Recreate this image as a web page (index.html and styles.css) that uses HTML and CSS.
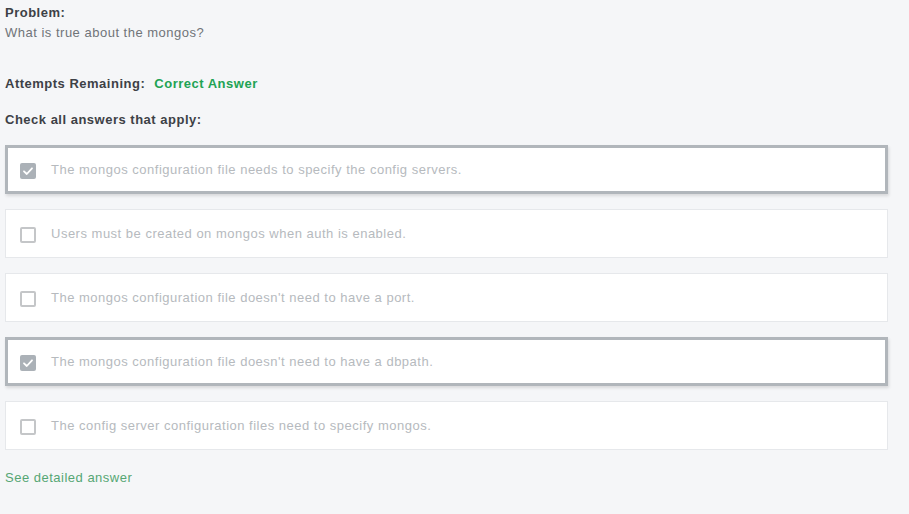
FILE: index.html
```html
<!DOCTYPE html>
<html>
<head>
<meta charset="utf-8">
<link rel="stylesheet" href="styles.css">
</head>
<body>
<div class="page">
  <div class="label">Problem:</div>
  <div class="question">What is true about the mongos?</div>
  <div class="attempts"><span class="label">Attempts Remaining:</span> <span class="correct">Correct Answer</span></div>
  <div class="label check-all">Check all answers that apply:</div>
  <div class="options">
    <div class="option checked">
      <span class="box"><svg viewBox="0 0 16 16" width="16" height="16"><path d="M4 8.3 L6.8 11 L12 5.3" fill="none" stroke="#fff" stroke-width="1.8" stroke-linecap="round" stroke-linejoin="round"/></svg></span>
      <span class="text">The mongos configuration file needs to specify the config servers.</span>
    </div>
    <div class="option">
      <span class="box"></span>
      <span class="text">Users must be created on mongos when auth is enabled.</span>
    </div>
    <div class="option">
      <span class="box"></span>
      <span class="text">The mongos configuration file doesn't need to have a port.</span>
    </div>
    <div class="option checked">
      <span class="box"><svg viewBox="0 0 16 16" width="16" height="16"><path d="M4 8.3 L6.8 11 L12 5.3" fill="none" stroke="#fff" stroke-width="1.8" stroke-linecap="round" stroke-linejoin="round"/></svg></span>
      <span class="text">The mongos configuration file doesn't need to have a dbpath.</span>
    </div>
    <div class="option">
      <span class="box"></span>
      <span class="text">The config server configuration files need to specify mongos.</span>
    </div>
  </div>
  <div class="detail">See detailed answer</div>
</div>
</body>
</html>
```
FILE: styles.css
```css
html, body {
  margin: 0;
  padding: 0;
  background: #f5f6f8;
}
.page {
  padding: 3px 21px 20px 5px;
  font-family: "Liberation Sans", Arial, sans-serif;
  font-size: 13px;
  line-height: 20px;
  letter-spacing: 0.5px;
  color: #3d4146;
}
.label {
  font-weight: bold;
  color: #3d4146;
}
.question {
  color: #707478;
}
.attempts {
  margin-top: 31px;
}
.correct {
  font-weight: bold;
  color: #21a354;
  margin-left: 5px;
}
.check-all {
  margin-top: 16px;
}
.options {
  margin-top: 15px;
  display: flex;
  flex-direction: column;
  gap: 15px;
}
.option {
  height: 49px;
  box-sizing: border-box;
  background: #fff;
  border: 1px solid #e6e8eb;
  display: flex;
  align-items: center;
  padding-left: 14px;
}
.option.checked {
  border: 3px solid #b1b6bb;
  padding-left: 12px;
  box-shadow: 1px 2px 3px rgba(0,0,0,0.12);
}
.box {
  width: 16px;
  height: 16px;
  box-sizing: border-box;
  border: 2px solid #c4c6c8;
  border-radius: 2px;
  background: #fff;
  flex: none;
  margin-top: 3px;
  display: flex;
}
.checked .box {
  border: none;
  background: #abb1b7;
}
.text {
  margin-left: 15px;
  color: #b6babe;
}
.detail {
  margin-top: 18px;
  color: #55a674;
}
```
